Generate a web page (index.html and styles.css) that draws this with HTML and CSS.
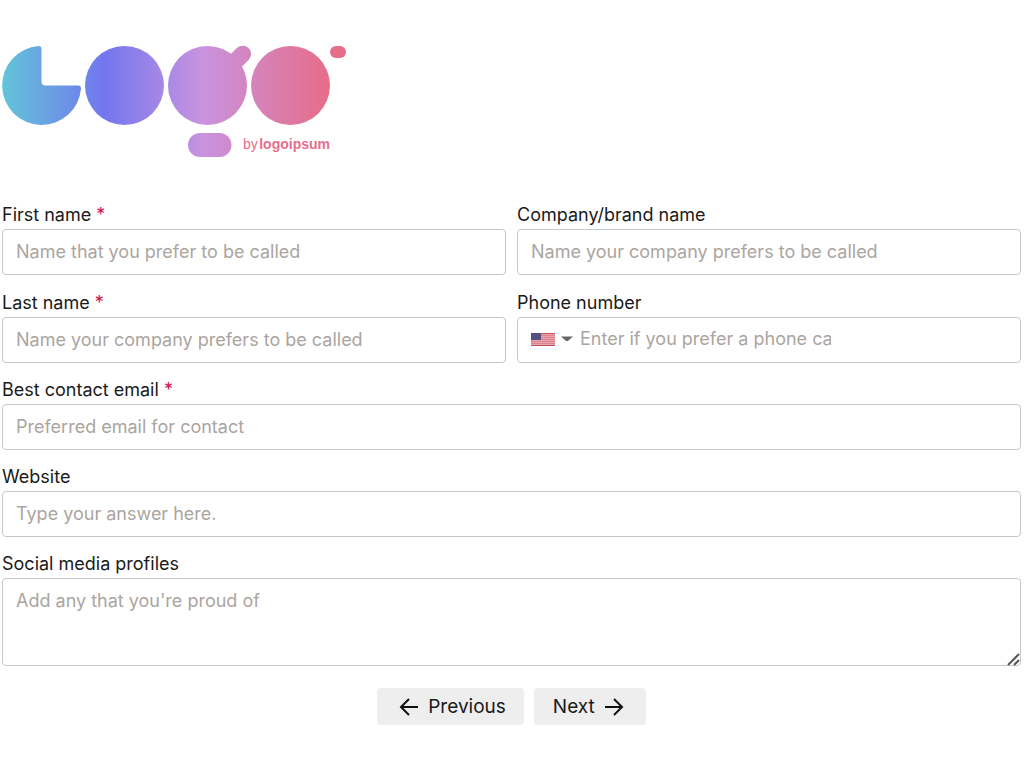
FILE: index.html
```html
<!DOCTYPE html>
<html lang="en">

<head>
  <meta charset="UTF-8">
  <meta name="viewport" content="width=device-width, initial-scale=1">
  <title>Contact details</title>
  <link rel="stylesheet" href="styles.css">
</head>

<body>
  <header class="header">
    <svg class="logo" viewBox="2 45 345 113" role="img" aria-label="Logo by logoipsum">
      <defs>
        <linearGradient id="logo-gradient" gradientUnits="userSpaceOnUse" x1="2" y1="0" x2="330" y2="0">
          <stop offset="0" stop-color="#62c5d8" />
          <stop offset="0.31" stop-color="#7376ef" />
          <stop offset="0.61" stop-color="#c893df" />
          <stop offset="1" stop-color="#e76d88" />
        </linearGradient>
      </defs>
      <g fill="url(#logo-gradient)">
        <path d="M38.500 46.100A3 3 0 0 1 41.500 49V81.500A4 4 0 0 0 45.500 85.500H78A3 3 0 0 1 81 88.500A39.500 39.500 0 1 1 38.500 46.100Z" />
        <circle cx="124.500" cy="85.500" r="39.500" />
        <circle cx="207.500" cy="85.500" r="39.500" />
        <path d="M236.800 48.100A8.300 8.300 0 0 1 248.600 59.900L240.500 68L225 76L224 61Z" />
        <circle cx="290.500" cy="85.500" r="39.500" />
        <rect x="188" y="133" width="43.500" height="24" rx="12" />
        <rect x="330" y="46" width="16" height="12" rx="6" />
      </g>
      <text class="logo-text" x="243" y="149">by</text>
      <text class="logo-text logo-name" x="330" y="149" text-anchor="end">logoipsum</text>
    </svg>
  </header>

  <form class="form">
    <div class="columns">
      <div class="field">
        <label for="first-name">First name <span class="required">*</span></label>
        <input class="control" type="text" id="first-name" placeholder="Name that you prefer to be called" required>
      </div>
      <div class="field">
        <label for="company">Company/brand name</label>
        <input class="control" type="text" id="company" placeholder="Name your company prefers to be called">
      </div>
      <div class="field">
        <label for="last-name">Last name <span class="required">*</span></label>
        <input class="control" type="text" id="last-name" placeholder="Name your company prefers to be called" required>
      </div>
      <div class="field">
        <label for="phone">Phone number</label>
        <div class="control phone">
          <div class="country">
            <svg class="flag" viewBox="0 0 24 13" aria-hidden="true">
              <rect width="24" height="13" fill="#e8a3ad" />
              <path d="M0 .5H24M0 12.500H24" stroke="#c9505f" />
              <path d="M0 2.500H24M0 4.500H24M0 6.500H24M0 8.500H24M0 10.500H24" stroke="#db8490" />
              <rect width="10" height="7" fill="#54507f" />
            </svg>
            <svg class="caret" viewBox="0 0 12 6" aria-hidden="true">
              <path d="M0 .5H12Q9 3 7.500 4.500Q6 5.500 4.500 4.500Q3 3 0 .5Z" fill="#666" />
            </svg>
            <select class="country-select" aria-label="Country">
              <option>United States</option>
            </select>
          </div>
          <input class="phone-input" type="tel" id="phone" placeholder="Enter if you prefer a phone call">
        </div>
      </div>
    </div>

    <div class="field">
      <label for="email">Best contact email <span class="required">*</span></label>
      <input class="control" type="email" id="email" placeholder="Preferred email for contact" required>
    </div>
    <div class="field">
      <label for="website">Website</label>
      <input class="control" type="text" id="website" placeholder="Type your answer here.">
    </div>
    <div class="field">
      <label for="social">Social media profiles</label>
      <div class="textarea-wrap">
        <textarea class="control textarea" id="social" placeholder="Add any that you're proud of"></textarea>
        <svg class="grip" viewBox="0 0 14 14" aria-hidden="true">
          <path d="M1 13L12 2M7 13L12 8" />
        </svg>
      </div>
    </div>

    <div class="actions">
      <button class="button previous" type="button">
        <svg class="arrow" viewBox="0 0 20 20" aria-hidden="true">
          <path d="M19 10H2M10 2L2 10L10 18" />
        </svg>
        Previous
      </button>
      <button class="button next" type="submit">
        Next
        <svg class="arrow" viewBox="0 0 20 20" aria-hidden="true">
          <path d="M1 10H18M10 2L18 10L10 18" />
        </svg>
      </button>
    </div>
  </form>
</body>

</html>
```
FILE: styles.css
```css
* {
  box-sizing: border-box;
}

body {
  margin: 0;
  padding: 45px 3px 40px 2px;
  background: #fff;
  color: #1a1a1a;
  font-family: Inter, sans-serif;
  font-size: 18px;
  line-height: 24px;
}

input,
textarea,
select,
button {
  font: inherit;
  color: inherit;
}

.header {
  margin-bottom: 45px;
}

.logo {
  display: block;
  width: 345px;
  max-width: 100%;
}

.logo-text {
  fill: #e66e8c;
  font-family: "Liberation Sans", sans-serif;
  font-size: 14px;
}

.logo-name {
  font-weight: 700;
}

.form {
  display: flex;
  flex-direction: column;
  gap: 15px;
}

.columns {
  display: grid;
  grid-template-columns: 1fr 1fr;
  gap: 16px 11px;
}

.field {
  display: flex;
  flex-direction: column;
  gap: 2px;
  min-width: 0;
}

.required {
  color: #cf1150;
}

.control {
  width: 100%;
  height: 46px;
  padding: 0 13px 2px;
  border: 1px solid #c3c8d0;
  border-radius: 4px;
  background: #fff;
}

::placeholder {
  color: #aba59f;
  opacity: 1;
}

.phone {
  display: flex;
  align-items: center;
  gap: 7px;
}

.country {
  position: relative;
  display: flex;
  align-items: center;
  gap: 6px;
}

.country-select {
  position: absolute;
  inset: 0;
  width: 100%;
  opacity: 0;
}

.flag {
  width: 24px;
  height: 13px;
}

.caret {
  width: 12px;
  height: 6px;
}

.phone-input {
  width: 251px;
  min-width: 0;
  padding: 0;
  border: 0;
  outline: 0;
  background: transparent;
}

.textarea-wrap {
  position: relative;
}

.textarea {
  display: block;
  height: 88px;
  padding: 10px 13px;
  resize: vertical;
}

.textarea::-webkit-resizer {
  background: transparent;
}

.grip {
  position: absolute;
  right: 0;
  bottom: 0;
  width: 14px;
  height: 14px;
  fill: none;
  stroke: #555;
  stroke-width: 2;
  pointer-events: none;
}

.actions {
  display: flex;
  justify-content: center;
  gap: 10px;
  margin-top: 7px;
}

.button {
  display: flex;
  align-items: center;
  gap: 9px;
  height: 37px;
  border: 0;
  border-radius: 4px;
  background: #eee;
  font-size: 19px;
}

.previous {
  padding: 0 18px 0 22px;
}

.next {
  padding: 0 22px 0 19px;
}

.arrow {
  width: 20px;
  height: 20px;
  fill: none;
  stroke: #111;
  stroke-width: 2;
}
```
